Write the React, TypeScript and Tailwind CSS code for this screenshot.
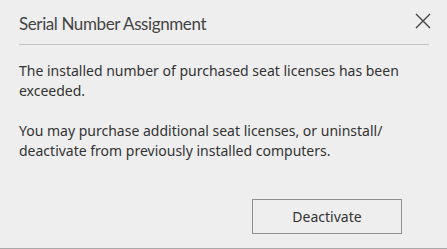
function App() {
    return (
        <div
            className="w-[447px] h-[249px] bg-[#eeeeee] flex flex-col border-b border-[#a9a9a9] text-[#333333]"
            style={{ fontFamily: '"Noto Sans", "Open Sans", sans-serif' }}
        >
            <div className="ml-[19px] mr-[18px] h-[45px] flex items-center justify-between border-b border-[#c4c4c4]">
                <span
                    className="text-[17px] text-[#444444] leading-none pt-[2px] tracking-[-0.4px]"
                    style={{ fontFamily: 'Lato, "Noto Sans", sans-serif' }}
                >
                    Serial Number Assignment
                </span>
                <button className="text-[#444444] mr-[-2px] pb-[2px]">
                    <svg width="16" height="16" viewBox="0 0 16 16" fill="none" stroke="currentColor" strokeWidth="1.4">
                        <path d="M1 1 L15 15 M15 1 L1 15" />
                    </svg>
                </button>
            </div>

            <div className="px-[19px] pt-[16px] text-[14px] leading-[20px]">
                <p>The installed number of purchased seat licenses has been exceeded.</p>
                <p className="mt-[20px]">
                    You may purchase additional seat licenses, or uninstall/ deactivate from previously installed computers.
                </p>
            </div>

            <div className="flex justify-end mt-auto mb-[14px] mr-[45px]">
                <button className="w-[150px] h-[35px] border border-[#8f8f8f] text-[14px] text-[#333333]">
                    Deactivate
                </button>
            </div>
        </div>
    );
}

export default App;
